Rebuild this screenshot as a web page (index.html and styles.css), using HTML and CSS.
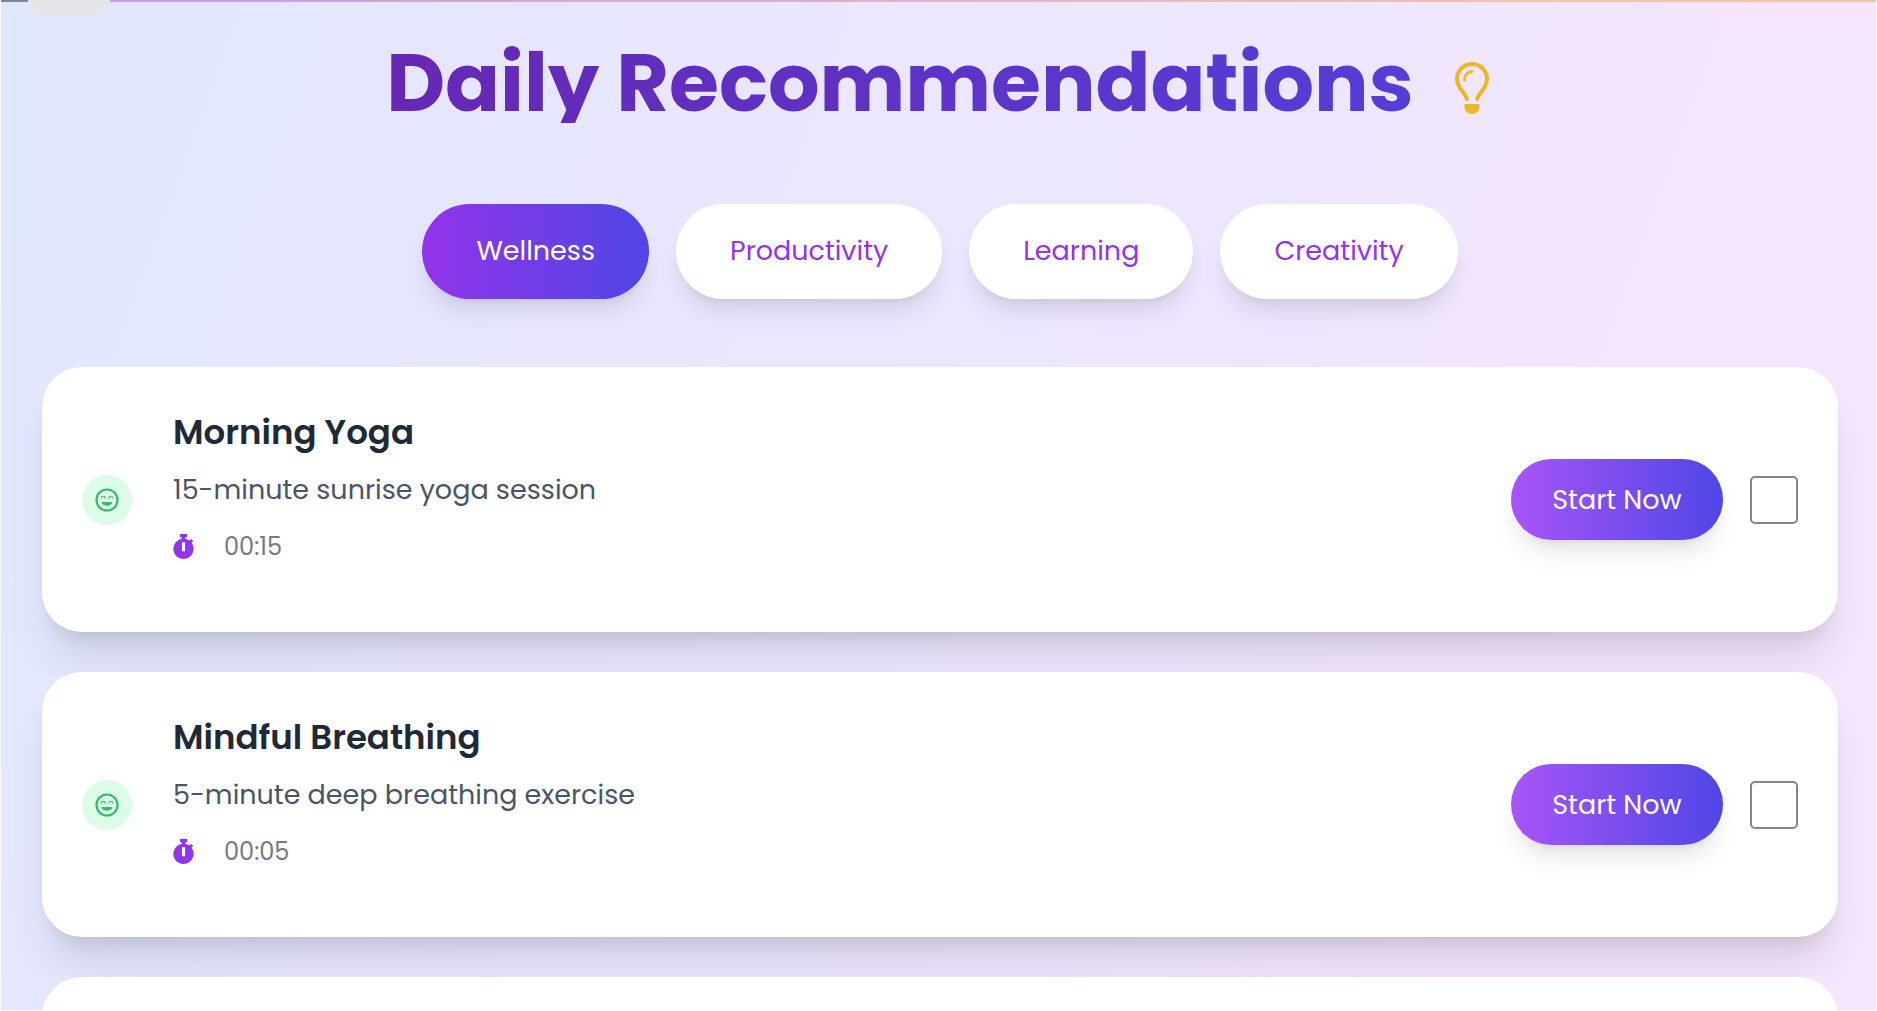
FILE: index.html
```html
<!DOCTYPE html>
<html lang="en">
<head>
<meta charset="utf-8">
<meta name="viewport" content="width=device-width, initial-scale=1">
<title>Daily Recommendations</title>
<link rel="stylesheet" href="styles.css">
</head>
<body>
<svg class="sprite" aria-hidden="true">
  <symbol id="smile" viewBox="0 0 24 24">
    <circle cx="12" cy="12" r="10.5" fill="none" stroke="currentColor" stroke-width="2.2"/>
    <path d="M6.2 10.2c.6-2.6 3.4-2.6 4 0M13.8 10.2c.6-2.6 3.4-2.6 4 0" fill="none" stroke="currentColor" stroke-width="1.2" stroke-linecap="round"/>
    <path d="M6.500 14h11c-.6 5-10.400 5-11 0z" fill="currentColor"/>
  </symbol>
  <symbol id="stopwatch" viewBox="0 0 20 24">
    <path fill="currentColor" fill-rule="evenodd" d="M6.500 0h7v3h-1.700v1.700a9.600 9.600 0 0 1 4 1.600l1.500-1.500 2 2-1.500 1.700A9.700 9.700 0 1 1 8.200 4.700V3H6.500zM8.500 8v8.500h3V8z"/>
  </symbol>
  <symbol id="bulb" viewBox="0 0 34 52">
    <path d="M12 37C9 29 2 26 2 17a15 15 0 0 1 30 0c0 9-7 12-10 20" fill="none" stroke="currentColor" stroke-width="4" stroke-linecap="round"/>
    <path d="M9.500 18c0-4.500 3-8 7.500-8.500" fill="none" stroke="currentColor" stroke-width="3" stroke-linecap="round"/>
    <path d="M9.500 42h15v3c0 4-3 7-7.500 7s-7.500-3-7.500-7z" fill="currentColor"/>
  </symbol>
</svg>
<div class="page">
  <div class="page-tab"></div>
  <main class="content">
    <h1 class="title">Daily Recommendations <svg class="title-icon" aria-hidden="true"><use href="#bulb"/></svg></h1>
    <nav class="tabs" aria-label="Categories">
      <button class="tab tab-active" type="button">Wellness</button>
      <button class="tab" type="button">Productivity</button>
      <button class="tab" type="button">Learning</button>
      <button class="tab" type="button">Creativity</button>
    </nav>
    <section class="cards">
      <article class="card">
        <span class="badge"><svg class="badge-icon" aria-hidden="true"><use href="#smile"/></svg></span>
        <div class="details">
          <h2 class="name" id="yoga">Morning Yoga</h2>
          <p class="description">15-minute sunrise yoga session</p>
          <p class="time"><svg class="time-icon" aria-hidden="true"><use href="#stopwatch"/></svg>00:15</p>
        </div>
        <button class="start" type="button">Start Now</button>
        <input class="done" type="checkbox" aria-labelledby="yoga">
      </article>
      <article class="card">
        <span class="badge"><svg class="badge-icon" aria-hidden="true"><use href="#smile"/></svg></span>
        <div class="details">
          <h2 class="name" id="breathing">Mindful Breathing</h2>
          <p class="description">5-minute deep breathing exercise</p>
          <p class="time"><svg class="time-icon" aria-hidden="true"><use href="#stopwatch"/></svg>00:05</p>
        </div>
        <button class="start" type="button">Start Now</button>
        <input class="done" type="checkbox" aria-labelledby="breathing">
      </article>
      <article class="card"></article>
    </section>
  </main>
</div>
</body>
</html>
```
FILE: styles.css
```css
* {
  box-sizing: border-box;
}

body,
h1,
h2,
p {
  margin: 0;
}

body {
  font-family: Poppins, Inter, sans-serif;
  font-size: 27px;
  line-height: 40px;
}

button {
  border: 0;
  font: inherit;
  cursor: pointer;
}

.sprite {
  display: none;
}

.page {
  position: relative;
  height: 100vh;
  overflow: hidden;
  border: 1px solid #fbfbff;
  border-top: 0;
  background: linear-gradient(110deg, #e0e7ff, #f3e6fe 80%);
}

.page::before {
  content: "";
  display: block;
  height: 2px;
  background: linear-gradient(90deg, #7f8699 27px, #f4f5fa 27px 109px, #c79be6 109px, #f5c0b0 80%, #f5c4a8);
}

.page-tab {
  position: absolute;
  top: 0;
  left: 27px;
  width: 82px;
  height: 15px;
  border-radius: 0 0 12px 12px;
  background: #e4e6ea;
}

.content {
  padding: 40px 38px 0 41px;
}

.title {
  display: flex;
  justify-content: center;
  align-items: center;
  gap: 40px;
  height: 81px;
  font-size: 81px;
  font-weight: 700;
  line-height: 81px;
  color: transparent;
  background: linear-gradient(90deg, #6b21a8, #4f46e5);
  background-clip: text;
}

.title-icon {
  width: 36px;
  height: 52px;
  margin: 10px 4px 0 0;
  color: #eab826;
}

.tabs {
  display: flex;
  justify-content: center;
  gap: 27px;
  padding: 81px 0 68px;
}

.tab {
  padding: 27px 54px 28px;
  border-radius: 48px;
  background: #fff;
  color: #9333ea;
  box-shadow: 0 17px 25px -5px rgb(0 0 0 / 10%), 0 7px 10px -7px rgb(0 0 0 / 10%);
}

.tab-active {
  background: linear-gradient(90deg, #9333ea, #4f46e5);
  color: #fff;
}

.cards {
  display: grid;
  gap: 40px;
}

.card {
  display: flex;
  align-items: center;
  min-height: 265px;
  padding: 40px;
  border-radius: 40px;
  background: #fff;
  box-shadow: 0 34px 42px -8px rgb(0 0 0 / 10%), 0 14px 17px -10px rgb(0 0 0 / 10%);
}

.badge {
  display: grid;
  place-items: center;
  width: 50px;
  height: 50px;
  border-radius: 50%;
  background: #dcfce7;
  color: #36b96a;
}

.badge-icon {
  width: 24px;
  height: 24px;
}

.details {
  flex: 1;
  padding: 0 41px 28px;
}

.name {
  font-size: 34px;
  font-weight: 600;
  line-height: 48px;
  color: #1f2937;
}

.description {
  padding: 14px 0 20px;
  color: #4b5563;
}

.time {
  display: flex;
  align-items: center;
  gap: 30px;
  font-size: 24px;
  line-height: 34px;
  color: #757983;
}

.time-icon {
  width: 21px;
  height: 25px;
  color: #9333ea;
}

.start {
  width: 212px;
  height: 81px;
  margin-right: 27px;
  border-radius: 41px;
  background: linear-gradient(90deg, #a855f7, #4f46e5);
  color: #fff;
  box-shadow: 0 17px 25px -5px rgb(0 0 0 / 10%), 0 7px 10px -7px rgb(0 0 0 / 10%);
}

.done {
  appearance: none;
  width: 48px;
  height: 48px;
  margin: 0;
  border: 2px solid #858585;
  border-radius: 5px;
  background: #fff;
}

.done:checked {
  background: #9333ea;
}
```
